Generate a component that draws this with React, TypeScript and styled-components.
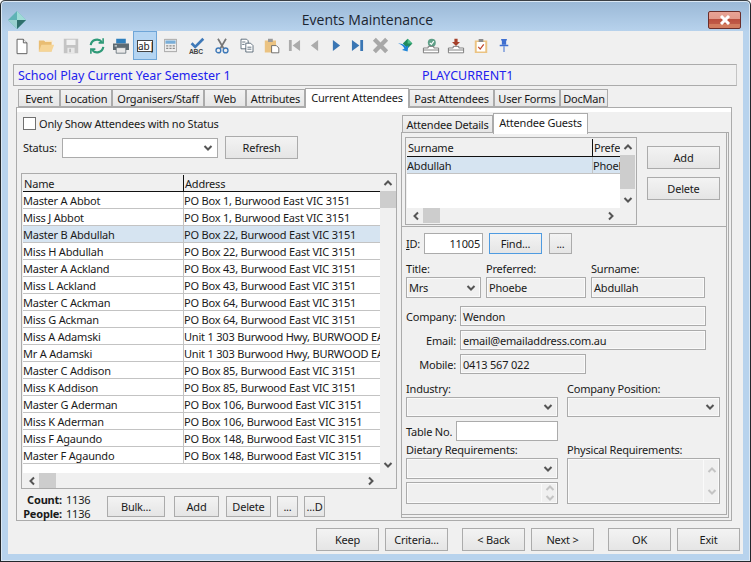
import * as React from 'react';
import styled, { createGlobalStyle } from 'styled-components';

const GlobalStyle = createGlobalStyle`
	html, body {
		margin: 0;
		padding: 0;
		background: #fff;
	}
	body {
		font-family: "Noto Sans", "DejaVu Sans", sans-serif;
		font-size: 11px;
		letter-spacing: -0.2px;
		color: #1a1a1a;
	}
	* {
		box-sizing: border-box;
	}
`;

const EDGE = '#ababab';

const people = [
	['Master A Abbot', 'PO Box 1, Burwood East VIC 3151'],
	['Miss J Abbot', 'PO Box 1, Burwood East VIC 3151'],
	['Master B Abdullah', 'PO Box 22, Burwood East VIC 3151'],
	['Miss H Abdullah', 'PO Box 22, Burwood East VIC 3151'],
	['Master A Ackland', 'PO Box 43, Burwood East VIC 3151'],
	['Miss L Ackland', 'PO Box 43, Burwood East VIC 3151'],
	['Master C Ackman', 'PO Box 64, Burwood East VIC 3151'],
	['Miss G Ackman', 'PO Box 64, Burwood East VIC 3151'],
	['Miss A Adamski', 'Unit 1 303 Burwood Hwy, BURWOOD EAST'],
	['Mr A Adamski', 'Unit 1 303 Burwood Hwy, BURWOOD EAST'],
	['Master C Addison', 'PO Box 85, Burwood East VIC 3151'],
	['Miss K Addison', 'PO Box 85, Burwood East VIC 3151'],
	['Master G Aderman', 'PO Box 106, Burwood East VIC 3151'],
	['Miss K Aderman', 'PO Box 106, Burwood East VIC 3151'],
	['Miss F Agaundo', 'PO Box 148, Burwood East VIC 3151'],
	['Master F Agaundo', 'PO Box 148, Burwood East VIC 3151'],
];

const mainTabs = [
	['Event', 42], ['Location', 52], ['Organisers/Staff', 92], ['Web', 42], ['Attributes', 59],
	['Current Attendees', 104], ['Past Attendees', 85], ['User Forms', 66], ['DocMan', 48],
] as const;

const toolbarItems = [
	['new', 24], ['open', 24], ['save', 26], ['refresh', 25], ['print', 24], ['ab', 24], ['calc', 27],
	['spell', 25], ['cut', 25], ['copy', 25], ['paste', 25], ['first', 20], ['prev', 21], ['next', 22],
	['last', 20], ['delete', 26], ['send', 25], ['trayOk', 25], ['trayIn', 25], ['task', 25], ['pin', 22],
] as const;

const Chevron = ({ dir = 'down', pale }: { dir?: 'up' | 'down' | 'left' | 'right'; pale?: boolean }) => {
	const turn = { down: 0, up: 180, left: 90, right: -90 }[dir];
	return (
		<svg width="10" height="8" viewBox="0 0 10 8" style={{ transform: `rotate(${turn}deg)` }}>
			<path d="M1.5 2 L5 5.5 L8.5 2" fill="none" stroke={pale ? '#c4c4c4' : '#555'} strokeWidth="2" />
		</svg>
	);
};

const ToolIcon = ({ name }: { name: string }) => {
	switch (name) {
		case 'new':
			return <svg width="18" height="18" viewBox="0 0 20 20"><path d="M4.500 2.500h7l4 4v12h-11z" fill="#fff" stroke="#555" /><path d="M11.500 2.500v4h4" fill="#eee" stroke="#555" /></svg>;
		case 'open':
			return <svg width="17" height="17" viewBox="0 0 20 20"><path d="M1 4h6l2 2h7v11H1z" fill="#e9bd72" /><path d="M1 17l3-8h15l-3 8z" fill="#f6d596" /><path d="M9 4h8v2H9z" fill="#fbe8c4" /></svg>;
		case 'save':
			return <svg width="18" height="18" viewBox="0 0 20 20"><path d="M2 2h16v16H2z" fill="#c4c4c4" /><path d="M5 3h10v6H5z" fill="#f1f1f1" /><path d="M6 12h8v6H6z" fill="#e8e8e8" /><path d="M8 13h2v4H8z" fill="#bcbcbc" /></svg>;
		case 'refresh':
			return <svg width="18" height="18" viewBox="0 0 20 20" fill="none" stroke="#2f9a78" strokeWidth="2.400"><path d="M3 9a7 7 0 0 1 12.500-3.300" /><path d="M17 11a7 7 0 0 1-12.500 3.300" /><path d="M16.800 1.500v5h-5" strokeWidth="1.800" /><path d="M3.200 18.500v-5h5" strokeWidth="1.800" /></svg>;
		case 'print':
			return <svg width="18" height="16" viewBox="0 0 22 20"><path d="M5 1h12v6H5z" fill="#2e7fbd" /><path d="M1 7h20v8H1z" fill="#5d6a72" /><path d="M5 12h12v7H5z" fill="#e9e9e9" stroke="#5d6a72" /><path d="M3 9h3v1.500H3z" fill="#d5dde2" /></svg>;
		case 'calc':
			return <svg width="13" height="15" viewBox="0 0 18 20"><path d="M.5 1.500h17v17H.5z" fill="#eee" stroke="#8d8d8d" /><path d="M2 3h14v4.500H2z" fill="#79aed8" /><path d="M3 9.500h3v2H3zm4.500 0h3v2h-3zm4.500 0h3v2h-3zM3 13h3v2H3zm4.500 0h3v2h-3zm4.500 0h3v2h-3z" fill="#8a8a8a" /></svg>;
		case 'spell':
			return (
				<svg width="18" height="18" viewBox="0 0 20 20">
					<path d="M4 7l4 4 9-9" fill="none" stroke="#3f79b8" strokeWidth="3" />
					<text x="1" y="19" fontSize="7.500" fontWeight="700" fill="#444" fontFamily="Liberation Sans, sans-serif">ABC</text>
				</svg>
			);
		case 'cut':
			return <svg width="16" height="16" viewBox="0 0 20 20" fill="none"><path d="M5 1l7 12M15 1L8 13" stroke="#777" strokeWidth="2.200" /><circle cx="5.500" cy="15.500" r="3" stroke="#3f79b8" strokeWidth="1.700" /><circle cx="14.500" cy="15.500" r="3" stroke="#3f79b8" strokeWidth="1.700" /></svg>;
		case 'copy':
			return <svg width="16" height="16" viewBox="0 0 20 20" stroke="#445566" fill="#fff"><path d="M2.500 1.500h7l2 2v10h-9z" /><path d="M8.500 6.500h6l3 3v8h-9z" /><path d="M10.500 11.500h5M10.500 14h5M4 5h4M4 8h3" fill="none" /></svg>;
		case 'paste':
			return <svg width="16" height="16" viewBox="0 0 20 20"><path d="M1 3h14v15H1z" fill="#ebc382" /><path d="M5 1h6v4H5z" fill="#9a9a9a" /><path d="M9.500 9.500h6l3 3v6h-9z" fill="#fff" stroke="#555" /></svg>;
		case 'first':
			return <svg width="13" height="13" viewBox="0 0 14 14" fill="#ababab"><path d="M1 1h3v12H1z" /><path d="M13 1v12L5 7z" /></svg>;
		case 'prev':
			return <svg width="9" height="13" viewBox="0 0 10 14" fill="#ababab"><path d="M9 1v12L1 7z" /></svg>;
		case 'next':
			return <svg width="9" height="13" viewBox="0 0 10 14" fill="#3a76b4"><path d="M1 1v12l8-6z" /></svg>;
		case 'last':
			return <svg width="13" height="13" viewBox="0 0 14 14" fill="#3a76b4"><path d="M1 1v12l8-6z" /><path d="M10 1h3v12h-3z" /></svg>;
		case 'delete':
			return <svg width="17" height="17" viewBox="0 0 18 18"><path d="M2.500 2.500l13 13M15.500 2.500l-13 13" stroke="#a8a8a8" strokeWidth="4.500" /></svg>;
		case 'send':
			return <svg width="18" height="16" viewBox="0 0 22 20"><path d="M13 1l6 6-6 6-6-6z" fill="#1f8a5c" /><path d="M13 1l6 6h-6z" fill="#4fc08c" /><path d="M1 7c5 0 9 2 10 4l3-2-1 8-7-2 3-2C8 11 5 8 1 7z" fill="#1f86d8" /></svg>;
		case 'trayOk':
			return <svg width="18" height="16" viewBox="0 0 22 20"><circle cx="12" cy="6" r="5" fill="#5e9f87" /><path d="M9.500 6l2 2 3-4" fill="none" stroke="#fff" strokeWidth="1.500" /><path d="M1.500 12.500h6v-2h7v2h6v6h-19z" fill="#fff" stroke="#666" /><path d="M1.500 15h19" stroke="#666" /></svg>;
		case 'trayIn':
			return <svg width="18" height="16" viewBox="0 0 22 20"><path d="M9 1h4v4h3l-5 5-5-5h3z" fill="#a5402a" /><path d="M1.500 12.500h6v-2h7v2h6v6h-19z" fill="#fff" stroke="#666" /><path d="M1.500 15h19" stroke="#666" /></svg>;
		case 'task':
			return <svg width="14" height="16" viewBox="0 0 18 20"><path d="M1 3h16v16H1z" fill="#ebc382" /><path d="M3.500 5h11v12h-11z" fill="#fff" /><path d="M6 1h6v4H6z" fill="#8b8b8b" /><path d="M5.500 11l2.500 3 4.500-6" fill="none" stroke="#c0452c" strokeWidth="1.600" /></svg>;
		case 'pin':
			return <svg width="10" height="15" viewBox="0 0 14 20" fill="#3f6fd0"><path d="M3 1h8v2h-1v6H4V3H3z" /><path d="M1 9h12v2H1z" /><path d="M6.300 11h1.400v8H6.300z" /></svg>;
		default:
			return null;
	}
};

const ScrollV = ({ thumbTop, thumbHeight }: { thumbTop: number; thumbHeight: number }) => (
	<VTrack>
		<Chevron dir="up" />
		<VThumb style={{ top: thumbTop, height: thumbHeight }} />
		<Chevron dir="down" />
	</VTrack>
);

const ScrollH = ({ thumbLeft, thumbWidth }: { thumbLeft: number; thumbWidth: number }) => (
	<HTrack>
		<Chevron dir="left" />
		<HThumb style={{ left: thumbLeft, width: thumbWidth }} />
		<Chevron dir="right" />
	</HTrack>
);

const Combo = ({ value, w, h }: { value?: string; w?: number; h?: number }) => (
	<ComboBox $w={w} $h={h}>
		<span>{value}</span>
		<Chevron dir="down" />
	</ComboBox>
);

export default function App() {
	return (
		<>
			<GlobalStyle />
			<Window>
				<TitleBar>
					<AppIcon>
						<svg width="18" height="18" viewBox="0 0 18 18">
							<path d="M9 0l9 9-9 9-9-9z" fill="#5fb3b5" />
							<path d="M9 0l9 9H9z" fill="#9fdcd6" />
							<path d="M0 9h9v9z" fill="#9ad0cf" />
							<path d="M9 9h9l-9 9z" fill="#2f6f6c" />
						</svg>
					</AppIcon>
					<Title>Events Maintenance</Title>
					<CloseButton>
						<svg width="14" height="10" viewBox="0 0 14 10">
							<path d="M3 1l8 8M11 1L3 9" stroke="#fff" strokeWidth="3" />
						</svg>
					</CloseButton>
				</TitleBar>

				<Client>
					<Toolbar>
						{toolbarItems.map(([item, width]) => (
							<ToolSlot key={item} $w={width} $active={item === 'ab'}>
								{item === 'ab' ? <AbBox>ab|</AbBox> : <ToolIcon name={item} />}
							</ToolSlot>
						))}
					</Toolbar>

					<Banner>
						<BannerTitle>School Play Current Year Semester 1</BannerTitle>
						<span>PLAYCURRENT1</span>
					</Banner>

					<MainTabs>
						{mainTabs.map(([label, width]) => (
							<Tab key={label} $w={width} $active={label === 'Current Attendees'}>{label}</Tab>
						))}
					</MainTabs>

					<MainPanel>
						<LeftPane>
							<CheckRow>
								<CheckBox />
								<span>Only Show Attendees with no Status</span>
							</CheckRow>
							<StatusRow>
								<StatusLabel>Status:</StatusLabel>
								<Combo w={156} h={20} />
								<Button $w={73} $h={23} $gap={7}>Refresh</Button>
							</StatusRow>

							<AttendeeGrid>
								<GridList>
									<HeaderRow $first={160} $h={17}>
										<HeaderCell>Name</HeaderCell>
										<HeaderCell>Address</HeaderCell>
									</HeaderRow>
									{people.map(([name, address]) => (
										<DataRow key={name} $first={160} $selected={name === 'Master B Abdullah'}>
											<DataCell>{name}</DataCell>
											<DataCell>{address}</DataCell>
										</DataRow>
									))}
								</GridList>
								<ScrollV thumbTop={16} thumbHeight={17} />
								<ScrollH thumbLeft={16} thumbWidth={17} />
							</AttendeeGrid>

							<ListFooter>
								<Totals>
									<TotalLine><b>Count:</b><span>1136</span></TotalLine>
									<TotalLine><b>People:</b><span>1136</span></TotalLine>
								</Totals>
								<Button $w={58} $h={21} $gap={1}>Bulk...</Button>
								<Button $w={45} $h={21} $gap={9}>Add</Button>
								<Button $w={45} $h={21} $gap={7}>Delete</Button>
								<Button $w={21} $h={21} $gap={6}>...</Button>
								<Button $w={21} $h={21} $gap={6}>...D</Button>
							</ListFooter>
						</LeftPane>

						<RightPane>
							<SubTabs>
								<SubTab $w={91}>Attendee Details</SubTab>
								<SubTab $w={95} $active>Attendee Guests</SubTab>
							</SubTabs>
							<SubPanel>
								<SubInner>
									<GuestSection>
										<GuestGrid>
											<GuestList>
												<HeaderRow $first={185} $h={18}>
													<HeaderCell>Surname</HeaderCell>
													<HeaderCell>Prefe</HeaderCell>
												</HeaderRow>
												<DataRow $first={185} $selected>
													<DataCell>Abdullah</DataCell>
													<DataCell>Phoebe</DataCell>
												</DataRow>
											</GuestList>
											<ScrollV thumbTop={16} thumbHeight={34} />
											<ScrollH thumbLeft={16} thumbWidth={17} />
										</GuestGrid>
										<GuestButtons>
											<Button $w={73} $h={23}>Add</Button>
											<Button $w={73} $h={23}>Delete</Button>
										</GuestButtons>
									</GuestSection>

									<Form>
										<IdRow>
											<IdLabel><u>I</u>D:</IdLabel>
											<Field $w={59} $h={21} $white $right>11005</Field>
											<FocusButton>Find...</FocusButton>
											<Button $w={23} $h={21} $gap={7}>...</Button>
										</IdRow>

										<NameGrid>
											<FieldLabel>Title:</FieldLabel>
											<FieldLabel>Preferred:</FieldLabel>
											<FieldLabel>Surname:</FieldLabel>
											<Combo value="Mrs" h={21} />
											<Field $h={21}>Phoebe</Field>
											<Field $h={21}>Abdullah</Field>
										</NameGrid>

										<ContactGrid>
											<ContactLabel>Company:</ContactLabel>
											<Field $w={246} $h={20}>Wendon</Field>
											<ContactLabel>Email:</ContactLabel>
											<Field $w={246} $h={20}>email@emailaddress.com.au</Field>
											<ContactLabel>Mobile:</ContactLabel>
											<Field $w={126} $h={20}>0413 567 022</Field>
										</ContactGrid>

										<LowerGrid>
											<FieldLabel>Industry:</FieldLabel>
											<FieldLabel>Company Position:</FieldLabel>
											<Combo h={20} />
											<Combo h={20} />
											<TableRow>
												<span>Table No.</span>
												<Field $w={102} $h={20} $white />
											</TableRow>
											<Spacer />
											<FieldLabel $top={2}>Dietary Requirements:</FieldLabel>
											<FieldLabel $top={2}>Physical Requirements:</FieldLabel>
											<DietaryStack>
												<Combo h={21} />
												<Memo $h={22}>
													<MemoButtons>
														<Chevron dir="up" pale />
														<Chevron dir="down" pale />
													</MemoButtons>
												</Memo>
											</DietaryStack>
											<Memo $h={46}>
												<MemoButtons>
													<Chevron dir="up" pale />
													<Chevron dir="down" pale />
												</MemoButtons>
											</Memo>
										</LowerGrid>
									</Form>
								</SubInner>
							</SubPanel>
						</RightPane>
					</MainPanel>

					<Footer>
						<Button $w={63} $h={23}>Keep</Button>
						<Button $w={63} $h={23} $gap={6}>Criteria...</Button>
						<Button $w={63} $h={23} $gap={14}>&lt; Back</Button>
						<Button $w={63} $h={23} $gap={6}>Next &gt;</Button>
						<Button $w={63} $h={23} $gap={14}>OK</Button>
						<Button $w={63} $h={23} $gap={6}>Exit</Button>
					</Footer>
				</Client>
			</Window>
		</>
	);
}

const Window = styled.div`
	width: 751px;
	height: 562px;
	display: flex;
	flex-direction: column;
	overflow: hidden;
	border: 1px solid #23282c;
	border-top-color: #3a3f44;
	border-radius: 5px 5px 0 0;
	background: linear-gradient(180deg, #9ab8d6 0%, #b8d3ed 31px, #b8d3ed 100%);
	box-shadow: inset 0 0 0 1px #dbe8f4;
`;

const TitleBar = styled.div`
	height: 30px;
	flex: none;
	display: grid;
	grid-template-columns: 1fr auto 1fr;
	align-items: center;
	padding: 0 9px 0 7px;
`;

const AppIcon = styled.div`
	display: flex;
	align-items: center;
	height: 18px;
	margin-top: 7px;
`;

const Title = styled.div`
	font-family: "Open Sans", "Noto Sans", sans-serif;
	font-size: 14px;
	letter-spacing: 0;
	color: #1b2530;
	padding-right: 14px;
	margin-top: 6px;
`;

const CloseButton = styled.div`
	justify-self: end;
	width: 33px;
	height: 18px;
	margin-top: 7px;
	display: flex;
	align-items: center;
	justify-content: center;
	border: 1px solid #6b2e2a;
	border-radius: 2px;
	background: linear-gradient(180deg, #e8a395 0%, #e29a8b 45%, #ba4f3e 46%, #c05a47 75%, #d27b5e 76%, #d27b5e 100%);
`;

const Client = styled.div`
	width: 735px;
	height: 523px;
	margin-left: 7px;
	flex: none;
	display: flex;
	flex-direction: column;
	background: #f0f0f0;
`;

const Toolbar = styled.div`
	height: 33px;
	flex: none;
	display: flex;
	align-items: flex-start;
	padding-left: 2px;
`;

const ToolSlot = styled.div<{ $w: number; $active?: boolean }>`
	width: ${props => props.$w}px;
	height: 29px;
	flex: none;
	display: flex;
	align-items: center;
	justify-content: center;
	border: 1px solid ${props => props.$active ? '#6fa6d8' : 'transparent'};
	background: ${props => props.$active ? '#b5d5f2' : 'transparent'};
`;

const AbBox = styled.div`
	width: 16px;
	height: 12px;
	border: 1px solid #444;
	background: #fff;
	font-size: 10px;
	line-height: 10px;
	text-align: center;
	color: #222;
`;

const Banner = styled.div`
	width: 724px;
	height: 22px;
	margin-left: 5px;
	flex: none;
	display: flex;
	align-items: center;
	border: 1px solid ${EDGE};
	border-right-color: #c4c4c4;
	padding-left: 4px;
	font-size: 12.5px;
	letter-spacing: 0;
	color: #2222ee;
`;

const BannerTitle = styled.span`
	width: 404px;
`;

const MainTabs = styled.div`
	height: 21px;
	flex: none;
	display: flex;
	align-items: flex-end;
	margin-left: 10px;
`;

const Tab = styled.div<{ $w: number; $active?: boolean }>`
	position: relative;
	z-index: ${props => props.$active ? 2 : 0};
	width: ${props => props.$w}px;
	height: ${props => props.$active ? 20 : 18}px;
	margin-bottom: ${props => props.$active ? -1 : 0}px;
	padding-bottom: ${props => props.$active ? 3 : 0}px;
	display: flex;
	align-items: center;
	justify-content: center;
	border: 1px solid ${EDGE};
	border-bottom: ${props => props.$active ? 'none' : `1px solid ${EDGE}`};
	background: ${props => props.$active ? '#fff' : 'linear-gradient(180deg, #f2f2f2, #e6e6e6)'};
	white-space: nowrap;
`;

const MainPanel = styled.div`
	width: 716px;
	height: 414px;
	margin-left: 8px;
	flex: none;
	display: flex;
	border: 1px solid ${EDGE};
	box-shadow: inset 0 4px 0 #fff;
`;

const LeftPane = styled.div`
	width: 381px;
	flex: none;
	padding: 8px 0 0 4px;
`;

const CheckRow = styled.div`
	height: 14px;
	display: flex;
	align-items: center;
	gap: 3px;
	margin-left: 2px;
`;

const CheckBox = styled.div`
	width: 13px;
	height: 13px;
	border: 1px solid #707070;
	background: #fff;
`;

const StatusRow = styled.div`
	height: 23px;
	margin-top: 6px;
	margin-left: 2px;
	display: flex;
	align-items: center;
`;

const StatusLabel = styled.span`
	width: 39px;
`;

const ComboBox = styled.div<{ $w?: number; $h?: number }>`
	width: ${props => props.$w ? `${props.$w}px` : 'auto'};
	height: ${props => props.$h || 20}px;
	flex: none;
	display: flex;
	align-items: center;
	justify-content: space-between;
	padding: 0 4px 0 2px;
	border: 1px solid ${EDGE};
	background: ${props => props.$w ? '#fff' : '#f0f0f0'};
	box-shadow: ${props => props.$w ? 'none' : 'inset 0 0 0 1px #fafafa'};
`;

const Button = styled.div<{ $w: number; $h: number; $gap?: number }>`
	width: ${props => props.$w}px;
	height: ${props => props.$h}px;
	margin-left: ${props => props.$gap || 0}px;
	flex: none;
	display: flex;
	align-items: center;
	justify-content: center;
	border: 1px solid ${EDGE};
	background: linear-gradient(180deg, #f3f3f3, #e5e5e5);
	white-space: nowrap;
`;

const FocusButton = styled(Button).attrs({ $w: 53, $h: 21, $gap: 6 })`
	border-color: #4f9be0;
`;

const AttendeeGrid = styled.div`
	width: 376px;
	height: 316px;
	margin-top: 14px;
	padding: 1px;
	display: grid;
	grid-template-columns: 357px 16px;
	grid-template-rows: 298px 15px;
	border: 1px solid ${EDGE};
	background: #f0f0f0;
`;

const GridList = styled.div`
	background: #fff;
	overflow: hidden;
`;

const HeaderRow = styled.div<{ $first: number; $h: number }>`
	height: ${props => props.$h}px;
	display: grid;
	grid-template-columns: ${props => props.$first}px 1fr;
	border-bottom: 1px solid #111;
	background: #f0f0f0;
`;

const HeaderCell = styled.div`
	padding-left: 1px;
	line-height: 17px;
	white-space: nowrap;
	overflow: hidden;
	& + & {
		border-left: 1px solid #111;
	}
`;

const DataRow = styled.div<{ $first: number; $selected?: boolean }>`
	height: 17px;
	display: grid;
	grid-template-columns: ${props => props.$first}px 1fr;
	border-bottom: 1px solid #c3c3c3;
	background: ${props => props.$selected ? '#d6e4f1' : '#fff'};
`;

const DataCell = styled.div`
	line-height: 17px;
	white-space: nowrap;
	overflow: hidden;
	& + & {
		border-left: 1px solid #c3c3c3;
	}
`;

const VTrack = styled.div`
	position: relative;
	display: flex;
	flex-direction: column;
	align-items: center;
	justify-content: space-between;
	padding: 4px 0;
	background: #f0f0f0;
`;

const VThumb = styled.div`
	position: absolute;
	left: 0;
	width: 100%;
	background: #cdcdcd;
`;

const HTrack = styled.div`
	position: relative;
	grid-column: 1 / 2;
	display: flex;
	align-items: center;
	justify-content: space-between;
	padding: 0 4px;
	background: #f0f0f0;
`;

const HThumb = styled.div`
	position: absolute;
	top: 0;
	height: 100%;
	background: #cdcdcd;
`;

const ListFooter = styled.div`
	display: flex;
	align-items: flex-start;
	padding-top: 7px;
`;

const Totals = styled.div`
	width: 85px;
	margin-top: -3px;
`;

const TotalLine = styled.div`
	display: grid;
	grid-template-columns: 41px 1fr;
	column-gap: 4px;
	line-height: 14px;
	b {
		text-align: right;
	}
`;

const RightPane = styled.div`
	width: 328px;
	margin-left: 3px;
	padding-top: 4px;
	flex: none;
`;

const SubTabs = styled.div`
	height: 21px;
	display: flex;
	align-items: flex-end;
	margin-left: 1px;
`;

const SubTab = styled.div<{ $w: number; $active?: boolean }>`
	position: relative;
	z-index: ${props => props.$active ? 2 : 0};
	width: ${props => props.$w}px;
	height: ${props => props.$active ? 21 : 18}px;
	margin-bottom: ${props => props.$active ? -1 : 0}px;
	padding-bottom: ${props => props.$active ? 3 : 0}px;
	display: flex;
	align-items: center;
	justify-content: center;
	border: 1px solid ${EDGE};
	border-bottom: ${props => props.$active ? 'none' : `1px solid ${EDGE}`};
	background: ${props => props.$active ? '#fff' : 'linear-gradient(180deg, #f2f2f2, #e6e6e6)'};
	white-space: nowrap;
`;

const SubPanel = styled.div`
	height: 386px;
	margin-top: -1px;
	border: 1px solid ${EDGE};
`;

const SubInner = styled.div`
	width: 325px;
	height: 382px;
	border-right: 1px solid ${EDGE};
	border-bottom: 1px solid ${EDGE};
`;

const GuestSection = styled.div`
	height: 94px;
	padding: 4px 0 0 3px;
	display: flex;
	align-items: flex-start;
	border-bottom: 1px solid ${EDGE};
`;

const GuestGrid = styled.div`
	width: 232px;
	height: 88px;
	padding: 1px;
	display: grid;
	grid-template-columns: 213px 15px;
	grid-template-rows: 69px 15px;
	border: 1px solid ${EDGE};
`;

const GuestList = styled.div`
	background: #fff;
	overflow: hidden;
`;

const GuestButtons = styled.div`
	margin: 9px 0 0 10px;
	display: flex;
	flex-direction: column;
	gap: 8px;
`;

const Form = styled.div`
	padding-left: 4px;
`;

const IdRow = styled.div`
	margin-top: 6px;
	display: flex;
	align-items: center;
`;

const IdLabel = styled.span`
	width: 18px;
`;

const Field = styled.div<{ $w?: number; $h: number; $white?: boolean; $right?: boolean }>`
	width: ${props => props.$w ? `${props.$w}px` : 'auto'};
	height: ${props => props.$h}px;
	flex: none;
	padding: 0 2px;
	display: flex;
	align-items: center;
	justify-content: ${props => props.$right ? 'flex-end' : 'flex-start'};
	border: 1px solid ${EDGE};
	background: ${props => props.$white ? '#fff' : '#f0f0f0'};
	box-shadow: ${props => props.$white ? 'none' : 'inset 0 0 0 1px #fafafa'};
	white-space: nowrap;
`;

const FieldLabel = styled.div<{ $top?: number }>`
	height: 15px;
	margin-top: ${props => props.$top || 0}px;
	line-height: 14px;
	white-space: nowrap;
`;

const NameGrid = styled.div`
	margin-top: 8px;
	display: grid;
	grid-template-columns: 75px 100px 114px;
	column-gap: 5px;
`;

const ContactGrid = styled.div`
	margin-top: 8px;
	display: grid;
	grid-template-columns: 50px auto;
	justify-content: start;
	align-items: center;
	column-gap: 4px;
	row-gap: 4px;
`;

const ContactLabel = styled.div`
	text-align: right;
	white-space: nowrap;
`;

const LowerGrid = styled.div`
	margin-top: 8px;
	display: grid;
	grid-template-columns: 152px 153px;
	column-gap: 9px;
`;

const TableRow = styled.div`
	height: 20px;
	margin-top: 4px;
	display: flex;
	align-items: center;
	justify-content: space-between;
	white-space: nowrap;
`;

const Spacer = styled.div``;

const DietaryStack = styled.div`
	display: flex;
	flex-direction: column;
	gap: 3px;
`;

const Memo = styled.div<{ $h: number }>`
	height: ${props => props.$h}px;
	display: flex;
	justify-content: flex-end;
	border: 1px solid ${EDGE};
	box-shadow: inset 0 0 0 1px #fafafa;
`;

const MemoButtons = styled.div`
	width: 16px;
	display: flex;
	flex-direction: column;
	align-items: center;
	justify-content: space-around;
	border-left: 1px solid #fafafa;
`;

const Footer = styled.div`
	margin-top: 7px;
	padding-left: 308px;
	display: flex;
`;
